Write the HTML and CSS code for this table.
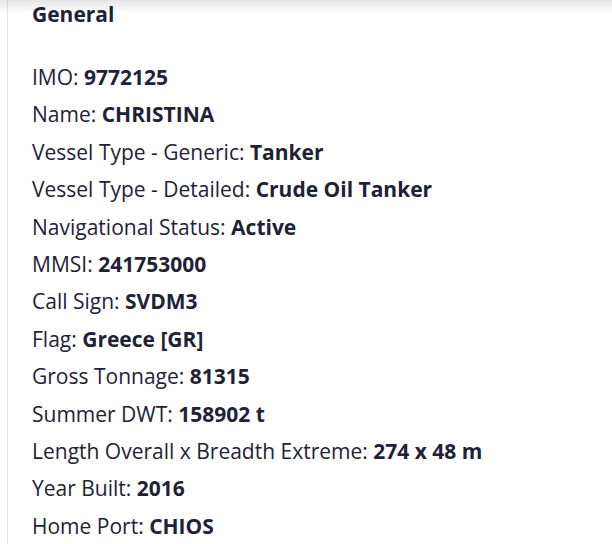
FILE: index.html
```html
<!DOCTYPE html>
<html>
<head>
<meta charset="utf-8">
<link rel="stylesheet" href="styles.css">
</head>
<body>
<div class="topshadow"></div>
<section class="panel">
  <h2 class="title">General</h2>
  <ul class="facts">
    <li>IMO: <b>9772125</b></li>
    <li>Name: <b>CHRISTINA</b></li>
    <li>Vessel Type - Generic: <b>Tanker</b></li>
    <li>Vessel Type - Detailed: <b>Crude Oil Tanker</b></li>
    <li>Navigational Status: <b>Active</b></li>
    <li>MMSI: <b>241753000</b></li>
    <li>Call Sign: <b>SVDM3</b></li>
    <li>Flag: <b>Greece [GR]</b></li>
    <li>Gross Tonnage: <b>81315</b></li>
    <li>Summer DWT: <b>158902 t</b></li>
    <li>Length Overall x Breadth Extreme: <b>274 x 48 m</b></li>
    <li>Year Built: <b>2016</b></li>
    <li>Home Port: <b>CHIOS</b></li>
  </ul>
</section>
</body>
</html>
```
FILE: styles.css
```css
html, body {
  margin: 0;
  padding: 0;
  background: #fff;
  height: 544px;
  overflow: hidden;
}
body {
  font-family: "Open Sans", sans-serif;
  color: #1f2235;
  position: relative;
}
.topshadow {
  position: absolute;
  left: 0;
  right: 0;
  top: 0;
  height: 14px;
  background: linear-gradient(to bottom, rgba(0,0,0,0.10), rgba(0,0,0,0));
  pointer-events: none;
}
.panel {
  margin-left: 7px;
  border-left: 1px solid #e6e6e6;
  padding-left: 24px;
  min-height: 544px;
  box-sizing: border-box;
}
.title {
  margin: 0;
  padding-top: 0;
  font-size: 21px;
  font-weight: 700;
  line-height: 28px;
}
.facts {
  list-style: none;
  margin: 0;
  padding: 0;
  padding-top: 31px;
  font-size: 21px;
  line-height: 37.4px;
}
.facts b {
  font-weight: 700;
}
```
